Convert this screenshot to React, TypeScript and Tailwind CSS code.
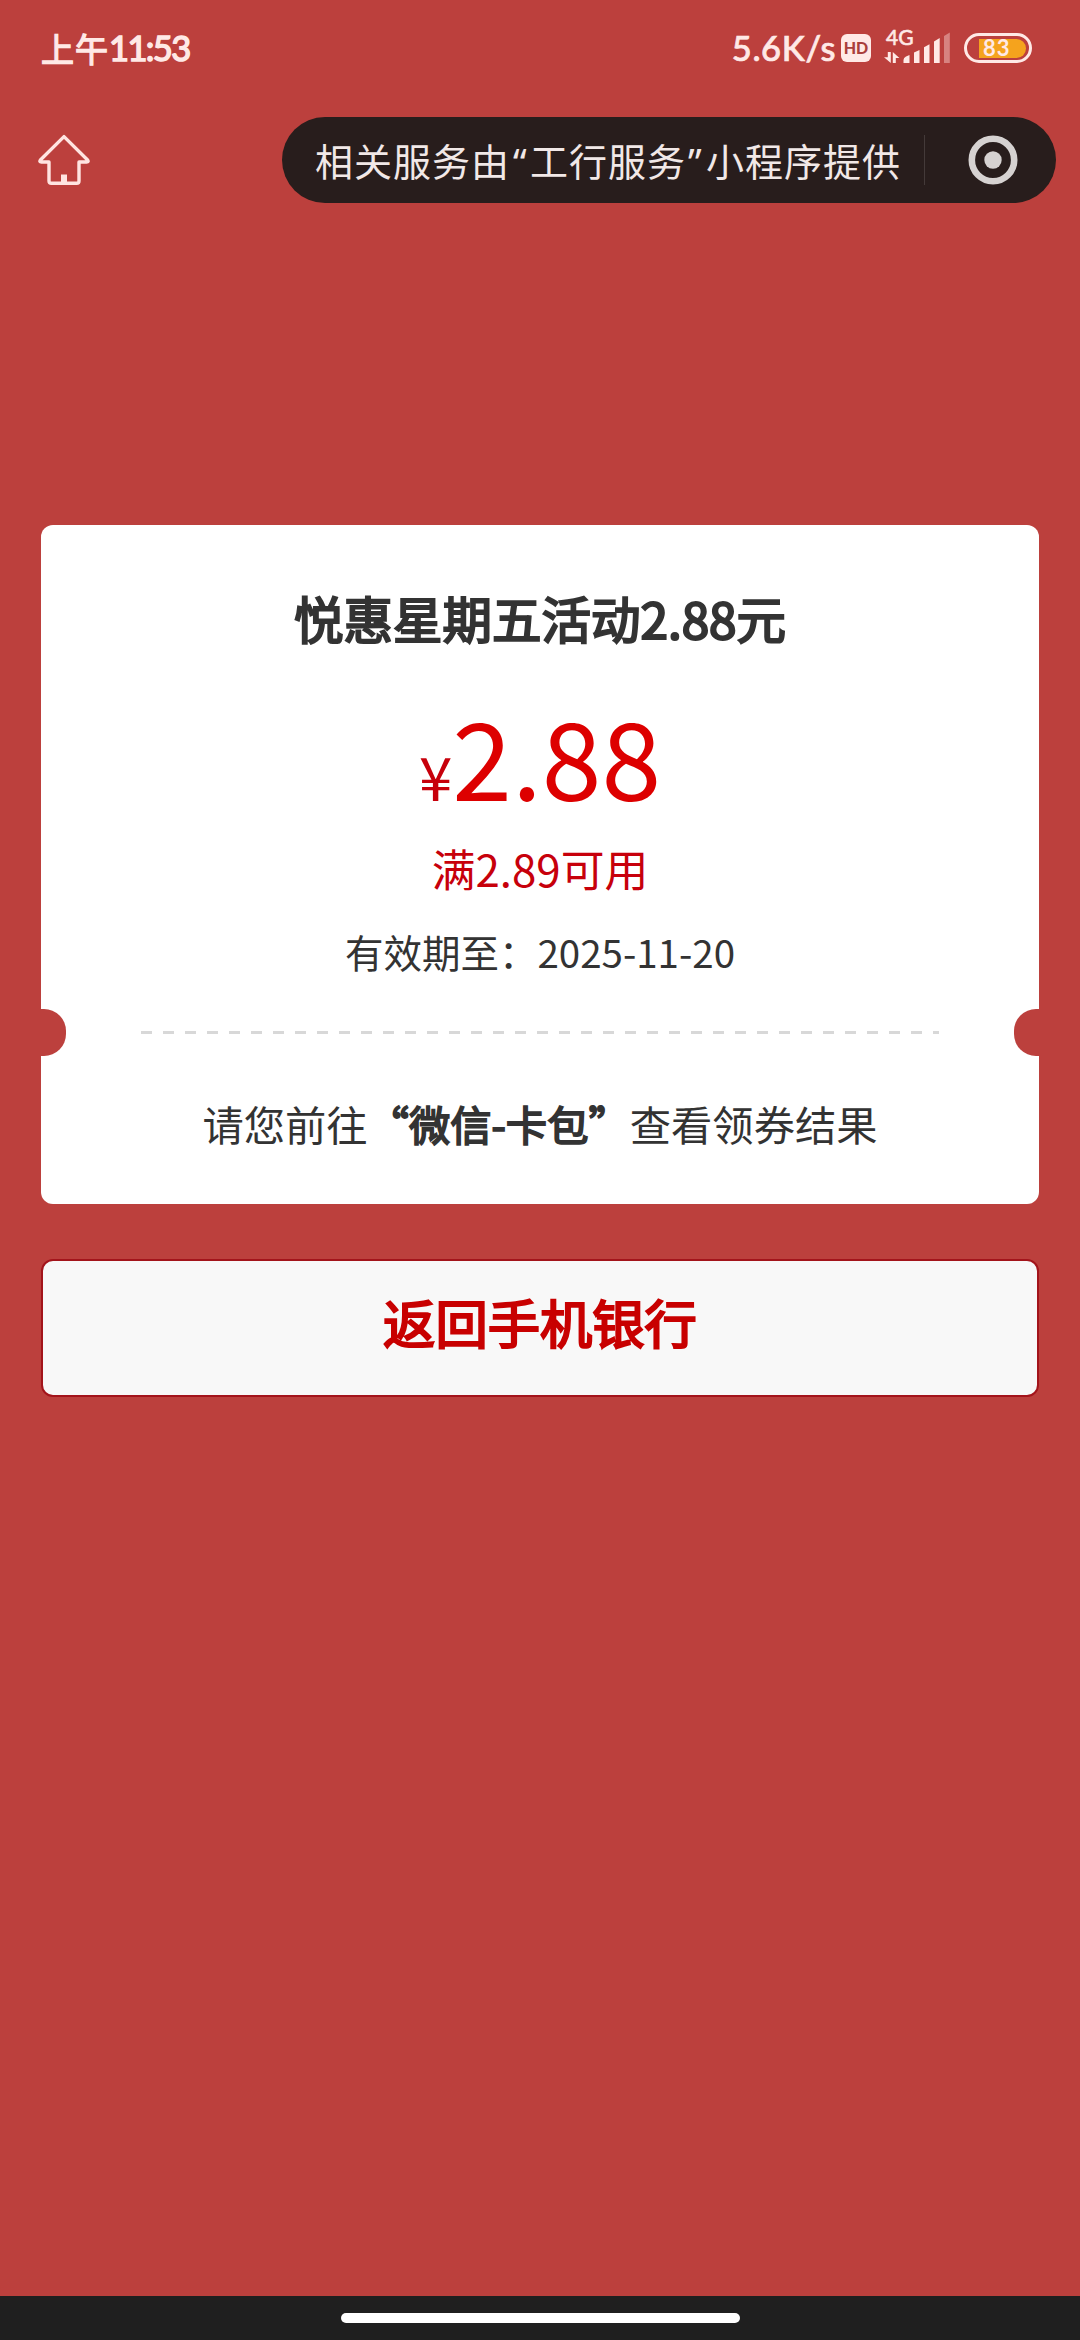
import React from 'react';

const HomeIcon: React.FC = () => (
  <svg className="w-[52px] h-[52px]" viewBox="0 0 52 52" fill="none" stroke="#ffe4e1" strokeWidth="3.4" strokeLinejoin="round" strokeLinecap="round">
    <path d="M26 2.6 L49.6 26 Q51 28 48.6 28 H41 V47 Q41 49.3 38.7 49.3 H13.3 Q11 49.3 11 47 V28 H3.4 Q1 28 2.4 26 Z" />
    <path d="M26 40.5 V48" strokeWidth="6" strokeLinecap="butt" />
  </svg>
);

const SignalIcon: React.FC = () => (
  <svg className="w-[68px] h-[32px]" viewBox="0 0 68 32" fill="#ffe9e6">
    <path d="M4.8 20 H7.8 V31 L1 25.2 H4.8 Z" />
    <path d="M9.8 20 L16.4 26 H12.8 V31 H9.8 Z" />
    <path d="M20.5 31 V28 Q20.5 25.5 23 24.5 L26.5 23 V31 Z" />
    <path d="M31 31 V20.5 L36.5 18 V31 Z" />
    <path d="M41 31 V15.3 L46.5 12.3 V31 Z" />
    <path d="M51 31 V9.4 L56.7 6 V31 Z" />
    <path d="M61 31 V4 L66.8 0.6 V31 Z" fillOpacity="0.4" />
  </svg>
);

const StatusBar: React.FC = () => (
  <header className="h-[96px] flex items-center justify-between pl-[41px] pr-[48px] text-[#ffe9e6]">
    <div className="flex items-center">
      <span className="text-[33px] leading-none font-normal font-['Noto_Sans_CJK_SC',sans-serif] [-webkit-text-stroke:1.3px_#ffe9e6] tracking-[1px]">上午</span>
      <span className="text-[34.5px] leading-none font-normal font-['Lato',sans-serif] tracking-[-1.6px] [-webkit-text-stroke:1.5px_#ffe9e6]">11:53</span>
    </div>
    <div className="flex items-center">
      <span className="text-[34.5px] leading-none font-medium font-['Lato',sans-serif] tracking-[0.6px] [-webkit-text-stroke:0.7px_#ffe9e6]">5.6K/s</span>
      <span className="ml-[5px] w-[30px] h-[28px] rounded-[6px] bg-[#ffe9e6] text-[#a93f3c] text-[16px] leading-none font-black font-['Lato',sans-serif] flex items-center justify-center">HD</span>
      <div className="relative ml-[12px] w-[68px] h-[32px]">
        <SignalIcon />
        <span className="absolute left-[3px] top-[-6px] text-[21px] leading-none font-['Lato',sans-serif] [-webkit-text-stroke:0.6px_#ffe9e6]">4G</span>
      </div>
      <div className="ml-[13px] w-[68px] h-[30px] rounded-full border-[3px] border-[#ffe9e6] flex items-center justify-end pr-[3px]">
        <span className="w-[47px] h-[19px] rounded-r-full rounded-l-[2px] bg-[#f5a31d] text-[22px] leading-none font-bold font-['Lato',sans-serif] flex items-center pl-[4px] tracking-[1px]">83</span>
      </div>
    </div>
  </header>
);

const NavBar: React.FC = () => (
  <nav className="h-[128px] flex items-center justify-between pl-[38px] pr-[24px]">
    <HomeIcon />
    <div className="w-[774px] h-[86px] rounded-full bg-[#281d1c] flex items-center pl-[33px]">
      <p className="w-[609px] whitespace-nowrap text-[38px] leading-none tracking-[1px] text-[#f1e8e7] font-['Noto_Sans_CJK_SC',sans-serif]">
        相关服务由<span className="inline-block w-[20px] pl-[3px] font-['Noto_Sans',sans-serif]">“</span>工行服务<span className="inline-block w-[20px] pl-[2px] font-['Noto_Sans',sans-serif]">”</span>小程序提供
      </p>
      <div className="w-px h-[50px] bg-[#443a39]" />
      <svg className="ml-[43px] w-[50px] h-[50px]" viewBox="0 0 50 50">
        <circle cx="25" cy="25" r="21.2" fill="none" stroke="#d6d2d1" strokeWidth="6.6" />
        <circle cx="25" cy="25" r="8.7" fill="#d6d2d1" />
      </svg>
    </div>
  </nav>
);

const CouponCard: React.FC = () => (
  <section className="h-[679.5px] rounded-[12px] bg-white text-[#333] text-center whitespace-nowrap">
    <h1 className="pt-[56.5px] h-[137.5px] text-[49.5px] leading-[74px] font-normal [-webkit-text-stroke:2.2px_#333]">悦惠星期五活动2.88元</h1>
    <p className="h-[177px] text-[107.5px] leading-[184px] text-[#dd0000]">
      <span className="text-[60px] text-[#c7000b]">¥</span>2.88
    </p>
    <p className="h-[58px] text-[43.8px] leading-[58px] text-[#c7000b]">满2.89可用</p>
    <p className="mt-[26px] h-[56px] text-[38.5px] leading-[56px]">有效期至：2025-11-20</p>
    <div className="mt-[30px] h-[47px] flex items-center justify-between">
      <div className="w-[25px] h-[47px] rounded-r-[22px] bg-[#bc403d]" />
      <div className="w-[798px] h-[3px] bg-[repeating-linear-gradient(90deg,#d8d8d8_0_11px,transparent_11px_22px)]" />
      <div className="w-[25px] h-[47px] rounded-l-[22px] bg-[#bc403d]" />
    </div>
    <p className="mt-[37px] text-[41.3px] leading-[60px]">
      请您前往<span className="[-webkit-text-stroke:1.8px_#333]">“微信-卡包”</span>查看领券结果
    </p>
  </section>
);

const App: React.FC = () => {
  return (
    <div className="w-[1080px] h-[2340px] flex flex-col bg-[#bc403d] overflow-hidden">
      <StatusBar />
      <NavBar />
      <main className="flex-1 px-[41px] pt-[300.5px] font-['Noto_Sans_CJK_SC',sans-serif]">
        <CouponCard />
        <button className="mt-[55px] pb-[13px] w-full h-[138px] rounded-[12px] border-2 border-[#a3141b] bg-[#f8f8f8] text-[52.3px] leading-none text-[#c80000] [-webkit-text-stroke:2.2px_#c80000]">
          返回手机银行
        </button>
      </main>
      <footer className="h-[44px] bg-[#1f1f1f] flex justify-center pt-[17px]">
        <div className="w-[399px] h-[10px] rounded-full bg-white" />
      </footer>
    </div>
  );
};

export default App;
